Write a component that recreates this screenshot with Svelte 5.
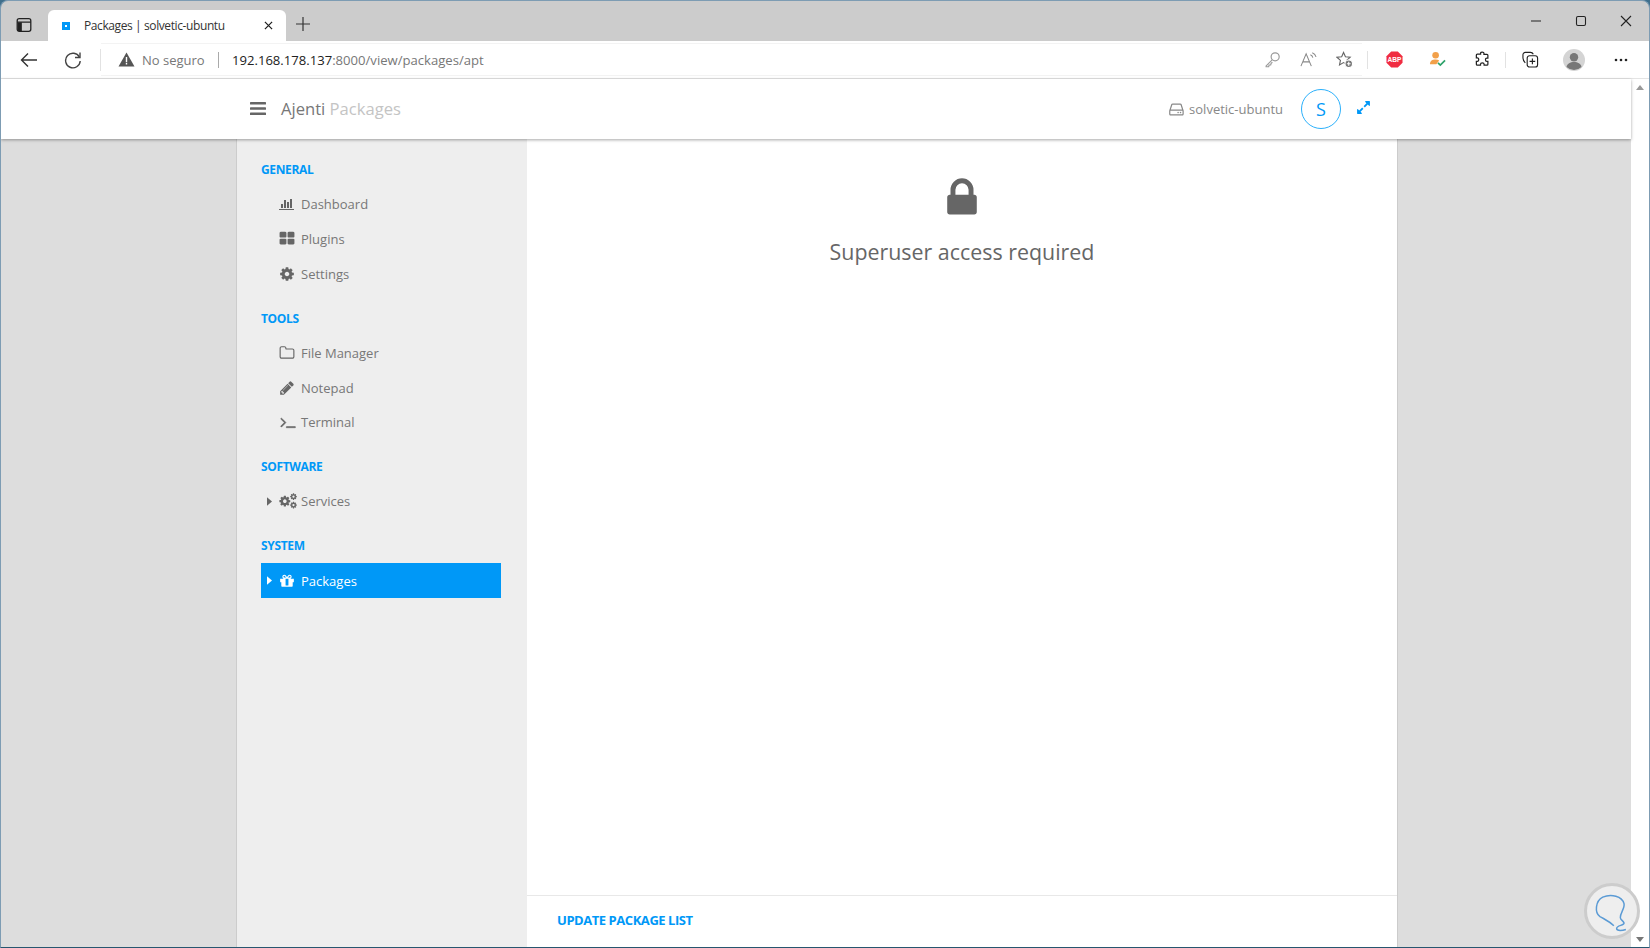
<script>
  const P = {
    chart: ['0 0 2048 1792', 'M512 896v512h-256v-512h256zm384-512v1024h-256v-1024h256zm1024 1152v128h-2048v-1536h128v1408h1920zm-640-896v768h-256v-768h256zm384-384v1152h-256v-1152h256z'],
    grid: ['0 0 1664 1792', 'M768 992v384q0 52-38 90t-90 38h-512q-52 0-90-38t-38-90v-384q0-52 38-90t90-38h512q52 0 90 38t38 90zm0-768v384q0 52-38 90t-90 38h-512q-52 0-90-38t-38-90v-384q0-52 38-90t90-38h512q52 0 90 38t38 90zm896 768v384q0 52-38 90t-90 38h-512q-52 0-90-38t-38-90v-384q0-52 38-90t90-38h512q52 0 90 38t38 90zm0-768v384q0 52-38 90t-90 38h-512q-52 0-90-38t-38-90v-384q0-52 38-90t90-38h512q52 0 90 38t38 90z'],
    cog: ['0 0 1792 1792', 'M1152 896q0-106-75-181t-181-75-181 75-75 181 75 181 181 75 181-75 75-181zm512-109v222q0 12-8 23t-20 13l-185 28q-19 54-39 91 35 50 107 138 10 12 10 25t-9 23q-27 37-99 108t-94 71q-12 0-26-9l-138-108q-44 23-91 38-16 136-29 186-7 28-36 28h-222q-14 0-24.5-8.5t-11.5-21.5l-28-184q-49-16-90-37l-141 107q-10 9-25 9-14 0-25-11-126-114-165-168-7-10-7-23 0-12 8-23 15-21 51-66.5t54-70.5q-27-50-41-99l-183-27q-13-2-21-12.5t-8-23.5v-222q0-12 8-23t19-13l186-28q14-46 39-92-40-57-107-138-10-12-10-24 0-10 9-23 26-36 98.5-107.5t94.5-71.5q13 0 26 10l138 107q44-23 91-38 16-136 29-186 7-28 36-28h222q14 0 24.5 8.5t11.5 21.5l28 184q49 16 90 37l142-107q9-9 24-9 13 0 25 10 129 119 165 170 7 8 7 22 0 12-8 23-15 21-51 66.5t-54 70.5q26 50 41 98l183 28q13 2 21 12.5t8 23.5z'],
    folder: ['0 0 1792 1792', 'M1600 1312v-704q0-40-28-68t-68-28h-704q-40 0-68-28t-28-68v-64q0-40-28-68t-68-28h-320q-40 0-68 28t-28 68v960q0 40 28 68t68 28h1216q40 0 68-28t28-68zm128-704v704q0 92-66 158t-158 66h-1216q-92 0-158-66t-66-158v-960q0-92 66-158t158-66h320q92 0 158 66t66 158v32h672q92 0 158 66t66 158z'],
    pencil: ['0 0 1792 1792', 'M491 1536l91-91-235-235-91 91v107h128v128h107zm523-928q0-22-22-22-10 0-17 7l-542 542q-7 7-7 17 0 22 22 22 10 0 17-7l542-542q7-7 7-17zm-54-192l416 416-832 832h-416v-416zm683 96q0 53-37 90l-166 166-416-416 166-165q36-38 90-38 53 0 91 38l235 234q37 39 37 91z'],
    terminal: ['0 0 1792 1792', 'M649 983l-466 466q-10 10-23 10t-23-10l-50-50q-10-10-10-23t10-23l393-393-393-393q-10-10-10-23t10-23l50-50q10-10 23-10t23 10l466 466q10 10 10 23t-10 23zm1079 457v64q0 14-9 23t-23 9h-960q-14 0-23-9t-9-23v-64q0-14 9-23t23-9h960q14 0 23 9t9 23z'],
    gift: ['0 0 1792 1792', 'M1056 1356v-716h-320v716q0 25 18 38.5t46 13.5h192q28 0 46-13.5t18-38.5zm-456-844h195l-126-161q-26-31-69-31-40 0-68 28t-28 68 28 68 68 28zm688-96q0-40-28-68t-68-28q-43 0-69 31l-125 161h194q40 0 68-28t28-68zm376 256v320q0 14-9 23t-23 9h-96v416q0 40-28 68t-68 28h-1088q-40 0-68-28t-28-68v-416h-96q-14 0-23-9t-9-23v-320q0-14 9-23t23-9h440q-93 0-158.5-65.5t-65.5-158.5 65.5-158.5 158.5-65.5q107 0 168 77l128 165 128-165q61-77 168-77 93 0 158.5 65.5t65.5 158.5-65.5 158.5-158.5 65.5h440q14 0 23 9t9 23z'],
    lock: ['0 0 1792 1792', 'M640 768h512v-192q0-106-75-181t-181-75-181 75-75 181v192zm832 96v576q0 40-28 68t-68 28h-960q-40 0-68-28t-28-68v-576q0-40 28-68t68-28h32v-192q0-184 132-316t316-132 316 132 132 316v192h32q40 0 68 28t28 68z'],
    expand: ['0 0 1792 1792', 'M883 1056q0 13-10 23l-332 332 144 144q19 19 19 45t-19 45-45 19h-448q-26 0-45-19t-19-45v-448q0-26 19-45t45-19 45 19l144 144 332-332q10-10 23-10t23 10l114 114q10 10 10 23zm781-864v448q0 26-19 45t-45 19-45-19l-144-144-332 332q-10 10-23 10t-23-10l-114-114q-10-10-10-23t10-23l332-332-144-144q-19-19-19-45t19-45 45-19h448q26 0 45 19t19 45z'],
    hdd: ['0 0 1792 1792', 'M1040 1216q0 33-23.5 56.5t-56.5 23.5-56.5-23.5-23.5-56.5 23.5-56.5 56.5-23.5 56.5 23.5 23.5 56.5zm256 0q0 33-23.5 56.5t-56.5 23.5-56.5-23.5-23.5-56.5 23.5-56.5 56.5-23.5 56.5 23.5 23.5 56.5zm128 160v-320q0-13-9.5-22.5t-22.5-9.5h-1216q-13 0-22.5 9.5t-9.5 22.5v320q0 13 9.5 22.5t22.5 9.5h1216q13 0 22.5-9.5t9.5-22.5zm-1230-480h1180l-157-482q-4-13-16-21.5t-26-8.5h-782q-14 0-26 8.5t-16 21.5zm1358 160v320q0 66-47 113t-113 47h-1216q-66 0-113-47t-47-113v-320q0-25 16-75l197-606q17-53 63-86t101-33h782q55 0 101 33t63 86l197 606q16 50 16 75z']
  };

  const sections = [
    { title: 'GENERAL', items: [
      { label: 'Dashboard', icon: 'chart' },
      { label: 'Plugins', icon: 'grid' },
      { label: 'Settings', icon: 'cog' }
    ] },
    { title: 'TOOLS', items: [
      { label: 'File Manager', icon: 'folder' },
      { label: 'Notepad', icon: 'pencil' },
      { label: 'Terminal', icon: 'terminal' }
    ] },
    { title: 'SOFTWARE', items: [
      { label: 'Services', icon: 'cogs', caret: true }
    ] },
    { title: 'SYSTEM', items: [
      { label: 'Packages', icon: 'gift', caret: true, active: true }
    ] }
  ];
</script>

{#snippet fa(name, cls)}
  <svg class={cls} viewBox={P[name][0]} aria-hidden="true"><path fill="currentColor" d={P[name][1]} /></svg>
{/snippet}

<div class="window">
  <div class="tabstrip">
    <svg class="tabs-btn" viewBox="0 0 16 16" fill="none" stroke="#222" stroke-width="1.3"><rect x="1.2" y="1.7" width="13.6" height="12.6" rx="2" /><path d="M1.2 5.2h13.6" /><path d="M5.2 5.2v9" /><rect x="1.6" y="5.4" width="3.4" height="8.6" fill="#222" stroke="none" /></svg>
    <div class="tab">
      <span class="favicon"><i></i></span>
      <span class="tab-title">Packages | solvetic-ubuntu</span>
      <svg class="tab-close" viewBox="0 0 10 10" stroke="#222" stroke-width="1.4"><path d="M1 1l8 8M9 1l-8 8" /></svg>
    </div>
    <svg class="newtab" viewBox="0 0 14 14" stroke="#333" stroke-width="1.2"><path d="M7 0v14M0 7h14" /></svg>
    <div class="winctl">
      <svg viewBox="0 0 12 12" stroke="#222" stroke-width="1.1" fill="none"><path d="M1 6h10" /></svg>
      <svg viewBox="0 0 12 12" stroke="#222" stroke-width="1.1" fill="none"><rect x="1.5" y="1.5" width="9" height="9" rx="1.5" /></svg>
      <svg viewBox="0 0 12 12" stroke="#222" stroke-width="1.1" fill="none"><path d="M1 1l10 10M11 1l-10 10" /></svg>
    </div>
  </div>

  <div class="toolbar">
    <svg class="nav back" viewBox="0 0 18 18" fill="none" stroke="#333" stroke-width="1.4"><path d="M17 9H1.5M8 2.5L1.5 9 8 15.5" /></svg>
    <svg class="nav reload" viewBox="0 0 18 18" fill="none" stroke="#444" stroke-width="1.4"><path d="M15.4 6.2A7.3 7.3 0 1 0 16.2 10" /><path d="M16 1.5v5h-5" /></svg>
    <span class="vsep first"></span>
    <div class="address">
      <svg class="warn" viewBox="0 0 16 15"><path fill="#555" d="M8 .5L16 14.5H0z" /><path fill="#fff" d="M7.3 5h1.4v5.2H7.3zM7.3 11h1.4v1.5H7.3z" /></svg>
      <span class="insecure">No seguro</span>
      <span class="addr-sep"></span>
      <span class="url">192.168.178.137<span class="url-dim">:8000/view/packages/apt</span></span>
      <div class="addr-icons">
        <svg viewBox="0 0 16 16" fill="none" stroke="#999" stroke-width="1.1"><circle cx="10.5" cy="5.5" r="3.8" /><path d="M7.7 8.3L2 14v0.8h2.4l.4-1.6h1.5l.4-1.6 1.2-1" /></svg>
        <svg viewBox="0 0 18 16" fill="none" stroke="#888" stroke-width="1.1"><path d="M1 15L6.5 2 12 15M3 10.5h7" /><path d="M11 3c1.5.6 2.3 1.6 2.6 3M13 .8c2.2.8 3.5 2.6 4 4.5" /></svg>
        <svg viewBox="0 0 18 18" fill="none" stroke="#666" stroke-width="1.2"><path d="M8 1.5l2 4.6 5 .5-3.7 3.3 1 4.8L8 12.3 3.7 14.7l1-4.8L1 6.600l5-.5z" /><circle cx="13.500" cy="13.500" r="4" fill="#777" stroke="#fff" /><path d="M13.500 11.500v4M11.500 13.500h4" stroke="#fff" /></svg>
      </div>
    </div>
    <span class="vsep second"></span>
    <svg class="ext abp" viewBox="0 0 18 18"><path fill="#f02c41" d="M5.500.5h7l5 5v7l-5 5h-7l-5-5v-7z" /><text x="9" y="11.800" text-anchor="middle" class="abp-text">ABP</text></svg>
    <svg class="ext person" viewBox="0 0 18 18"><circle cx="7" cy="4.500" r="3.500" fill="#f2a04a" /><path fill="#f2a04a" d="M1 14c0-3.500 2.500-5 6-5 1.500 0 2.800.3 3.800 1l-3 4z" /><path d="M9.500 12.500l2.500 2.500 5-5" fill="none" stroke="#2fa36b" stroke-width="1.800" /></svg>
    <svg class="ext puzzle" viewBox="0 0 18 18" fill="none" stroke="#222" stroke-width="1.300"><path d="M7 2.200c0-1.500 3.500-1.500 3.500 0v1.300h3.200a1 1 0 0 1 1 1v3h-1.100c-2 0-2 3.500 0 3.500h1.100v3a1 1 0 0 1-1 1h-3v-1c0-2-3.800-2-3.800 0v1H3.500a1 1 0 0 1-1-1v-3h1c2 0 2-3.800 0-3.800h-1v-3a1 1 0 0 1 1-1H7z" /></svg>
    <span class="vsep third"></span>
    <svg class="ext coll" viewBox="0 0 18 18" fill="none" stroke="#222" stroke-width="1.200"><rect x="5.500" y="5" width="11" height="12" rx="2.500" /><path d="M11 8v6M8 11h6" /><path d="M3.500 12.500C2 11 1 9 1 7.500V4a2.500 2.500 0 0 1 2.500-2.500H9c1.500 0 2.500 1 3 2" /></svg>
    <svg class="ext profile" viewBox="0 0 22 22"><circle cx="11" cy="11" r="11" fill="#d4d4d4" /><circle cx="11" cy="8.200" r="4.200" fill="#777" /><path fill="#777" d="M3.500 18c.5-3.500 3.800-5 7.500-5s7 1.500 7.500 5a11 11 0 0 1-15 0z" /></svg>
    <svg class="ext dots" viewBox="0 0 14 4" fill="#222"><circle cx="2" cy="2" r="1.300" /><circle cx="7" cy="2" r="1.300" /><circle cx="12" cy="2" r="1.300" /></svg>
  </div>

  <div class="page">
    <div class="main">
      <header>
        <div class="wrap head-row">
          <svg class="burger" viewBox="0 0 16 13" fill="#666"><rect width="16" height="2.600" rx=".6" /><rect y="5.200" width="16" height="2.600" rx=".6" /><rect y="10.400" width="16" height="2.600" rx=".6" /></svg>
          <span class="brand">Ajenti <span class="brand-dim">Packages</span></span>
          <span class="host">{@render fa('hdd', 'hdd')}solvetic-ubuntu</span>
          <span class="avatar">S</span>
          {@render fa('expand', 'expand')}
        </div>
      </header>
      <div class="wrap body">
        <nav>
          {#each sections as s}
            <h4>{s.title}</h4>
            <ul>
              {#each s.items as it}
                <li class:active={it.active}>
                  <span class="caret-slot">{#if it.caret}<svg viewBox="0 0 6 10"><path fill="currentColor" d="M0 0l6 5-6 5z" /></svg>{/if}</span>
                  <span class="ico-slot">
                    {#if it.icon === 'cogs'}
                      <svg class="ico cogs" viewBox="0 0 2200 1792"><path fill="currentColor" transform="translate(-60 180) scale(.82)" d={P.cog[1]} /><path fill="currentColor" transform="translate(1230 -60) scale(.5)" d={P.cog[1]} /><path fill="currentColor" transform="translate(1230 920) scale(.5)" d={P.cog[1]} /></svg>
                    {:else}
                      {@render fa(it.icon, it.icon === 'terminal' ? 'ico term' : 'ico')}
                    {/if}
                  </span>
                  <span class="lbl">{it.label}</span>
                </li>
              {/each}
            </ul>
          {/each}
        </nav>
        <main>
          <div class="notice">
            {@render fa('lock', 'lock')}
            <p>Superuser access required</p>
          </div>
          <footer><a href="#update" class="update">UPDATE PACKAGE LIST</a></footer>
        </main>
      </div>
    </div>
    <div class="scrollbar">
      <svg viewBox="0 0 8 5"><path fill="#999" d="M4 0l4 5H0z" /></svg>
      <svg viewBox="0 0 8 5"><path fill="#777" d="M4 5l4-5H0z" /></svg>
    </div>
    <div class="mark">
      <svg viewBox="0 0 54 54" fill="none" stroke="#5b9bd5" stroke-width="1.600"><path d="M29 43C24 38 19 36 14 33 8 29 9 16 17 12c9-4 21-1 23 7 1 5-4 10-4 15 0 3 3 3 4 6 0 3-8 2-8 6 0 3 7 2 10 1" /></svg>
    </div>
  </div>
</div>

<style>
  :global(html), :global(body) { margin: 0; padding: 0; background: #3f6f8c; }
  .window {
    width: 1650px; height: 948px; box-sizing: border-box;
    display: flex; flex-direction: column; overflow: hidden;
    background: #ccc; border: 1px solid #7d9cb3; border-bottom-color: #27566f; border-radius: 8px 8px 0 0;
    font-family: "Open Sans", "Noto Sans", sans-serif;
  }

  .tabstrip { height: 40px; flex: none; display: flex; align-items: flex-end; position: relative; box-sizing: border-box; }
  .tabs-btn { width: 16px; height: 16px; margin: 0 0 8px 15px; flex: none; }
  .tab {
    width: 238px; height: 31px; margin-left: 16px; background: #fff; border-radius: 6px 6px 0 0;
    display: flex; align-items: center; box-sizing: border-box; padding-left: 14px; flex: none;
  }
  .favicon { width: 8px; height: 8px; background: #0098f7; display: flex; align-items: center; justify-content: center; flex: none; }
  .favicon i { width: 2px; height: 2px; background: #fff; }
  .tab-title { margin-left: 14px; font-size: 12px; letter-spacing: -.4px; color: #333; white-space: nowrap; width: 174px; overflow: hidden; }
  .tab-close { width: 9px; height: 9px; margin-left: 6px; flex: none; }
  .newtab { width: 14px; height: 14px; margin: 0 0 10px 10px; flex: none; }
  .winctl { margin-left: auto; display: flex; align-self: flex-start; gap: 33px; padding: 14px 17px 0 0; }
  .winctl svg { width: 12px; height: 12px; }

  .toolbar {
    height: 37px; flex: none; background: #fff; display: flex; align-items: center;
    border-bottom: 1px solid #e4e4e4; box-sizing: content-box;
  }
  .nav { width: 18px; height: 18px; flex: none; }
  .back { margin-left: 19px; }
  .reload { margin-left: 26px; }
  .vsep { width: 1px; height: 22px; background: #e2e2e2; flex: none; }
  .first { margin-left: 18px; }
  .address {
    width: 1261px; height: 31px; flex: none; display: flex; align-items: center;
    box-shadow: 0 1px 0 #f3f3f3, 0 -1px 0 #f3f3f3;
  }
  .warn { width: 17px; height: 15px; margin-left: 17px; flex: none; }
  .insecure { margin-left: 7px; font-size: 13px; color: #777; width: 70px; white-space: nowrap; }
  .addr-sep { width: 1px; height: 16px; background: #aaa; margin-left: 6px; flex: none; }
  .url { margin-left: 13px; font-size: 13.100px; color: #222; white-space: nowrap; }
  .url-dim { color: #777; }
  .addr-icons { margin-left: auto; display: flex; align-items: center; gap: 19px; padding-right: 9px; }
  .addr-icons svg { width: 17px; height: 17px; }
  .second { margin-left: 5px; height: 18px; }
  .ext { flex: none; }
  .abp { width: 17px; height: 17px; margin-left: 18px; }
  .abp-text { font: bold 7px "Liberation Sans", sans-serif; fill: #fff; }
  .person { width: 17px; height: 17px; margin-left: 26px; }
  .puzzle { width: 17px; height: 17px; margin-left: 28px; }
  .third { margin-left: 14px; height: 16px; }
  .coll { width: 17px; height: 17px; margin-left: 16px; }
  .profile { width: 22px; height: 22px; margin-left: 24px; }
  .dots { width: 14px; height: 4px; margin-left: 29px; }

  .page { flex: 1; min-height: 0; display: flex; position: relative; background: #fff; }
  .main { flex: 1; min-width: 0; display: flex; flex-direction: column; background: #ddd; }
  .wrap { width: 1162px; margin: 0 0 0 235px; box-sizing: border-box; }
  header { height: 60px; flex: none; background: #fff; box-shadow: 0 1px 3px rgba(0,0,0,.35); position: relative; z-index: 1; }
  .head-row { height: 60px; display: flex; align-items: center; padding-left: 14px; }
  .burger { width: 16px; height: 13px; flex: none; margin-bottom: 2px; }
  .brand { margin: 0 0 2px 15px; font-size: 16.600px; color: #777; white-space: nowrap; }
  .brand-dim { color: #c4c4c4; }
  .host { margin-left: auto; display: flex; align-items: center; font-size: 13px; color: #888; white-space: nowrap; }
  .hdd { width: 17px; height: 17px; margin-right: 3px; flex: none; color: #888; }
  .avatar {
    width: 40px; height: 40px; margin-left: 18px; box-sizing: border-box; flex: none; border: 1.500px solid #2bb0fb;
    border-radius: 50%; display: flex; align-items: center; justify-content: center; font-size: 18px; color: #0098f7;
  }
  .expand { width: 15px; height: 15px; margin: -3px 27px 0 15px; color: #0098f7; flex: none; }

  .body { flex: 1; min-height: 0; display: flex; border-left: 1px solid #ccc; border-right: 1px solid #ccc; }
  nav { width: 290px; flex: none; background: #eee; padding: 21px 26px 0 24px; box-sizing: border-box; }
  h4 { margin: 0; font-size: 12px; letter-spacing: -.35px; font-weight: 700; color: #0098f7; line-height: 20px; height: 20px; }
  ul { list-style: none; margin: 7px 0 17.500px; padding: 0; }
  li { height: 34.700px; display: flex; align-items: center; font-size: 13px; color: #777; }
  .caret-slot { width: 18px; flex: none; display: flex; padding-left: 6px; box-sizing: border-box; color: #666; }
  .caret-slot svg { width: 5px; height: 9px; }
  .ico-slot { width: 22px; flex: none; display: flex; align-items: center; color: #666; }
  .ico { width: 16px; height: 16px; flex: none; }
  .ico.cogs { width: 19px; }
  .ico.term { width: 18px; }
  .ico.term path { stroke: currentColor; stroke-width: 60px; }
  .lbl { white-space: nowrap; }
  .active { background: #0098f7; color: #fff; height: 35px; }
  .active .caret-slot, .active .ico-slot { color: #fff; }

  main { flex: 1; min-width: 0; background: #fff; display: flex; flex-direction: column; }
  .notice { flex: 1; display: flex; flex-direction: column; align-items: center; padding-top: 36px; }
  .lock { width: 46px; height: 46px; color: #666; }
  .notice p { margin: 17px 0 0; font-size: 21.400px; color: #666; line-height: 28px; }
  footer { height: 52px; flex: none; border-top: 1px solid #e8e8e8; display: flex; align-items: center; padding: 0 0 3px 30px; box-sizing: border-box; }
  .update { font-size: 13px; letter-spacing: -.45px; font-weight: 700; color: #0098f7; text-decoration: none; }

  .scrollbar { width: 18px; flex: none; display: flex; flex-direction: column; justify-content: space-between; align-items: center; padding: 6px 0 5px; box-sizing: border-box; background: #fff; }
  .scrollbar svg { width: 8px; height: 5px; }
  .mark {
    position: absolute; right: 9px; bottom: 8px; width: 50px; height: 50px; border-radius: 50%;
    background: #eee; border: 3px solid #ccc; display: flex;
  }
  .mark svg { width: 50px; height: 50px; }
</style>
